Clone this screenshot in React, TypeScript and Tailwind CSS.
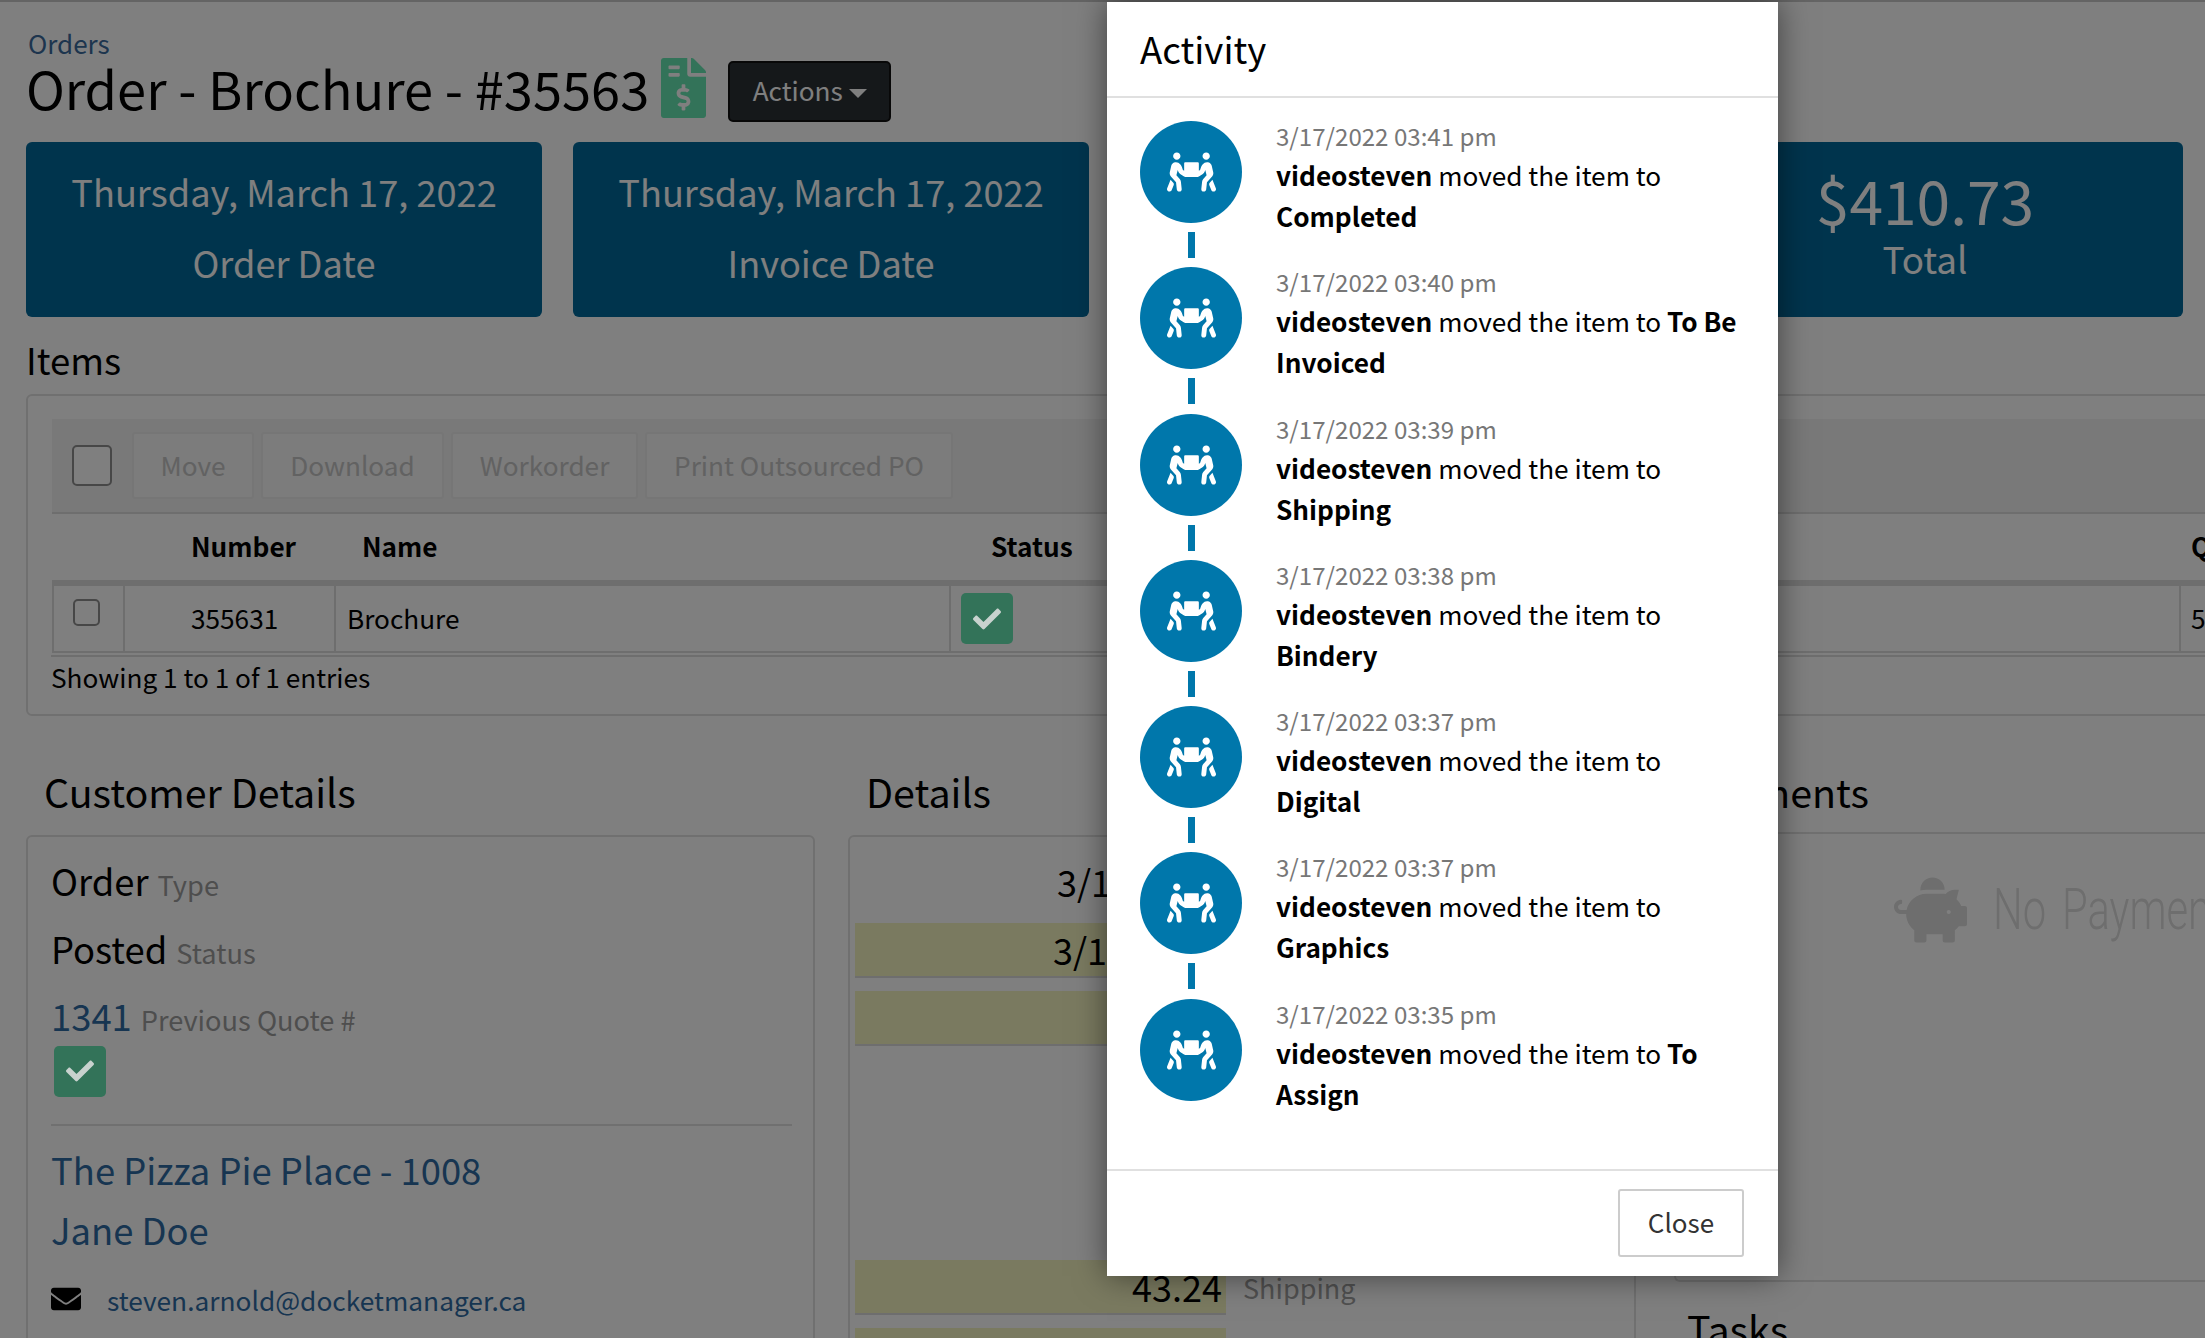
import React from "react";
import { FaPeopleCarry, FaFileInvoiceDollar, FaCheck, FaEnvelope, FaPiggyBank } from "react-icons/fa";

const font = { fontFamily: '"Noto Sans CJK SC", "Noto Sans", sans-serif' };

const entries: [string, string][] = [
  ["3/17/2022 03:41 pm", "Completed"],
  ["3/17/2022 03:40 pm", "To Be Invoiced"],
  ["3/17/2022 03:39 pm", "Shipping"],
  ["3/17/2022 03:38 pm", "Bindery"],
  ["3/17/2022 03:37 pm", "Digital"],
  ["3/17/2022 03:37 pm", "Graphics"],
  ["3/17/2022 03:35 pm", "To Assign"],
];

function Check({ className }: { className: string }) {
  return (
    <div className={"relative z-20 flex w-[52px] h-[51px] items-center justify-center rounded-[5px] bg-[#337359] " + className}>
      <FaCheck className="text-[#c8d2ce] w-[28px] h-[28px]" />
    </div>
  );
}

function StatCard({ children }: { children?: React.ReactNode }) {
  return (
    <div className="flex h-[175px] w-[516px] shrink-0 flex-col items-center rounded-[6px] bg-[#00699a] text-white">
      {children}
    </div>
  );
}

function Btn({ w, children }: { w: string; children: React.ReactNode }) {
  return (
    <div className={"flex h-[67px] items-center justify-center rounded-[3px] border-2 border-[#ececec] bg-[#f8f8f8] text-[26.2px] text-[#c4c4c4] " + w}>
      {children}
    </div>
  );
}

function Field({ value, label, link }: { value: string; label: string; link?: boolean }) {
  return (
    <div className="flex h-[67.5px] items-baseline gap-[9px] leading-[67.5px]">
      <span className={"text-[36.4px] " + (link ? "text-[#2f6ba3]" : "text-black")}>{value}</span>
      <span className="text-[27.2px] text-[#9c9c9c]">{label}</span>
    </div>
  );
}

function DetailRow({ value, label, yellow, h = "h-[68px]", pr = "pr-[4px]" }: { value?: string; label?: string; yellow?: boolean; h?: string; pr?: string }) {
  return (
    <div className={"flex w-[760px] shrink-0 items-start gap-[17px] " + h}>
      <div className={"flex h-[55px] w-[371px] items-center justify-end border-b-2 text-[36px] leading-[55px] " + pr + " " + (yellow ? "border-[#dcdcdc] bg-[#f4f4c0]" : "border-transparent")}>
        {value}
      </div>
      <div className="text-[27px] leading-[55px] text-[#a0a0a0]">{label}</div>
    </div>
  );
}

export default function App() {
  return (
    <div style={font} className="relative h-[1338px] w-[2205px] overflow-hidden bg-white text-black">
      <div className="absolute inset-0 z-10 bg-[rgba(0,0,0,0.5)]" />

      {/* Page */}
      <div className="w-[2300px] border-t-2 border-[#c8c8c8] pl-[26px]">
        <div className="pl-[2px] pt-[24px] text-[26px] leading-[34px] text-[#3a6a9c]">Orders</div>
        <div className="-mt-[9px] flex h-[72px] items-center">
          <h1 className="text-[52.4px] font-normal leading-[72px]">Order - Brochure - #35563</h1>
          <FaFileInvoiceDollar className="relative z-20 ml-[12px] mt-[2px] h-[60px] w-[45px] shrink-0 text-[#337359]" />
          <div className="ml-[22px] mt-[8px] flex h-[61px] w-[163px] items-center justify-center gap-[6px] rounded-[5px] border-2 border-[#111] bg-[#2b3035] text-[26.2px] text-white">
            Actions
            <span className="mt-[4px] h-0 w-0 border-x-[9px] border-t-[9px] border-x-transparent border-t-white" />
          </div>
        </div>

        <div className="mt-[19px] flex gap-[31px]">
          <StatCard>
            <div className="mt-[28px] text-[36.2px] leading-[42px]">Thursday, March 17, 2022</div>
            <div className="mt-[29px] text-[36.2px] leading-[42px]">Order Date</div>
          </StatCard>
          <StatCard>
            <div className="mt-[28px] text-[36.2px] leading-[42px]">Thursday, March 17, 2022</div>
            <div className="mt-[29px] text-[36.2px] leading-[42px]">Invoice Date</div>
          </StatCard>
          <StatCard />
          <StatCard>
            <div className="mt-[25px] text-[60.5px] leading-[64px]">$410.73</div>
            <div className="mt-[3px] text-[36.8px] leading-[48px]">Total</div>
          </StatCard>
        </div>

        <div className="mt-[21px] text-[36.5px] font-normal leading-[44px]">Items</div>

        {/* Items panel */}
        <div className="mt-[12px] h-[322px] w-[2260px] rounded-[6px] border-2 border-[#e0e0e0] px-[24px] pt-[23px]">
          <div className="flex h-[93px] items-center gap-[7px] bg-[#f2f2f2] pl-[20px]">
            <div className="mr-[13px] h-[41px] w-[40px] rounded-[5px] border-2 border-[#8f8f8f] bg-white" />
            <Btn w="w-[122px]">Move</Btn>
            <Btn w="w-[183px]">Download</Btn>
            <Btn w="w-[187px]">Workorder</Btn>
            <Btn w="w-[308px]">Print Outsourced PO</Btn>
          </div>
          <div className="grid h-[70px] grid-cols-[71px_211px_615px_1230px_100px] items-center border-y-2 border-[#dcdcdc] text-[26.2px] font-bold">
            <div />
            <div className="pl-[68px]">Number</div>
            <div className="pl-[28px]">Name</div>
            <div className="pl-[42px]">Status</div>
            <div className="pl-[12px]">Qty</div>
          </div>
          <div className="grid h-[71px] grid-cols-[71px_211px_615px_1230px_100px] border-b-2 border-t-[4px] border-[#dcdcdc] text-[26.2px]">
            <div className="border-l-2 border-[#dcdcdc] pl-[19px] pt-[13px]">
              <div className="h-[27px] w-[27px] rounded-[5px] border-2 border-[#8f8f8f] bg-white" />
            </div>
            <div className="flex items-center border-l-2 border-[#dcdcdc] pl-[66px]">355631</div>
            <div className="flex items-center border-l-2 border-[#dcdcdc] pl-[11px]">Brochure</div>
            <div className="flex items-center border-l-2 border-[#dcdcdc] pl-[10px]"><Check className="" /></div>
            <div className="flex items-center border-l-2 border-[#dcdcdc] pl-[10px]">5</div>
          </div>
          <div className="mt-[2px] border-t-2 border-[#dcdcdc] text-[26.2px] leading-[41px] -ml-[1px]">Showing 1 to 1 of 1 entries</div>
        </div>

        {/* Lower columns */}
        <div className="mt-[49px] flex">
          <div className="w-[789px] shrink-0">
            <div className="pl-[18px] text-[39.4px] leading-[52px]">Customer Details</div>
            <div className="mt-[18px] h-[600px] rounded-[6px] border-2 border-[#e0e0e0] pl-[23px] pr-[21px] pt-[10px]">
              <Field value="Order" label="Type" />
              <Field value="Posted" label="Status" />
              <Field value="1341" label="Previous Quote #" link />
              <Check className="ml-[3px] -mt-[4px]" />
              <div className="mt-[27px] border-t-2 border-[#e0e0e0]" />
              <div className="mt-[13px] text-[36.4px] leading-[60px] text-[#2f6ba3]">The Pizza Pie Place - 1008</div>
              <div className="text-[36.4px] leading-[60px] text-[#2f6ba3]">Jane Doe</div>
              <div className="mt-[21px] flex items-center gap-[26px] text-[26.3px] text-[#2f6ba3]">
                <FaEnvelope className="h-[30px] w-[30px] text-black" />
                steven.arnold@docketmanager.ca
              </div>
            </div>
          </div>

          <div className="ml-[33px] w-[788px] shrink-0">
            <div className="pl-[18px] text-[39.4px] leading-[52px]">Details</div>
            <div className="mt-[18px] flex h-[600px] flex-col rounded-[6px] border-2 border-[#e0e0e0] pl-[5px] pt-[18px]">
              <DetailRow value="3/17/2022" pr="pr-[1px]" />
              <DetailRow value="3/17/2022" yellow pr="pr-[5px]" />
              <DetailRow yellow />
              <DetailRow value="$" />
              <DetailRow />
              <DetailRow h="h-[65px]" />
              <DetailRow value="43.24" label="Shipping" yellow />
              <DetailRow yellow />
            </div>
          </div>

          <div className="ml-[38px] w-[600px] shrink-0">
            <div className="pl-[14px] text-[39.4px] leading-[52px]">Payments</div>
            <div className="mt-[15px] h-[450px] rounded-bl-[6px] border-y-2 border-l-2 border-[#e0e0e0] pl-[218px] pt-[32px]">
              <div className="flex items-center text-[#dcdcdc]">
                <FaPiggyBank className="h-[66px] w-[73px] shrink-0" />
                <span style={{ fontFamily: "Roboto, sans-serif" }} className="ml-[26px] origin-left scale-x-[0.72] whitespace-nowrap text-[58px] font-light [word-spacing:8px]">No Payments</span>
              </div>
            </div>
            <div className="mt-[20px] pl-[13px] text-[39.4px] leading-[52px]">Tasks</div>
          </div>
        </div>
      </div>

      {/* Modal */}
      <div className="absolute left-[1107px] top-[2px] z-30 h-[1274px] w-[671px] bg-white shadow-[0_0_30px_rgba(0,0,0,0.5)]">
        <div className="flex h-[96px] items-center border-b-2 border-[#e0e0e0] pl-[33px] text-[36.6px]">Activity</div>
        <div className="h-[1071px] pl-[33px] pr-[40px] pt-[23px]">
          {entries.map(([date, to], i) => (
            <div key={date + i} className="flex h-[146.3px] gap-[34px]">
              <div className="flex w-[102px] shrink-0 flex-col items-center">
                <div className="flex h-[102px] w-[102px] items-center justify-center rounded-full bg-[#0077ab]">
                  <FaPeopleCarry className="h-[44px] w-[49px] text-white" />
                </div>
                {i < entries.length - 1 && <div className="mt-[9px] h-[26px] w-[7px] bg-[#0077ab]" />}
              </div>
              <div className="-mt-[3px] text-[26.2px] leading-[41px]">
                <div className="h-[37px] text-[24.1px] leading-[35px] text-[#777]">{date}</div>
                <b>videosteven</b> moved the item to <b>{to}</b>
              </div>
            </div>
          ))}
        </div>
        <div className="flex h-[107px] items-start justify-end border-t-2 border-[#e0e0e0] pr-[34px] pt-[18px]">
          <div className="flex h-[68px] w-[126px] items-center justify-center rounded-[3px] border-2 border-[#ccc] pb-[3px] text-[26px] text-[#333]">Close</div>
        </div>
      </div>
    </div>
  );
}
